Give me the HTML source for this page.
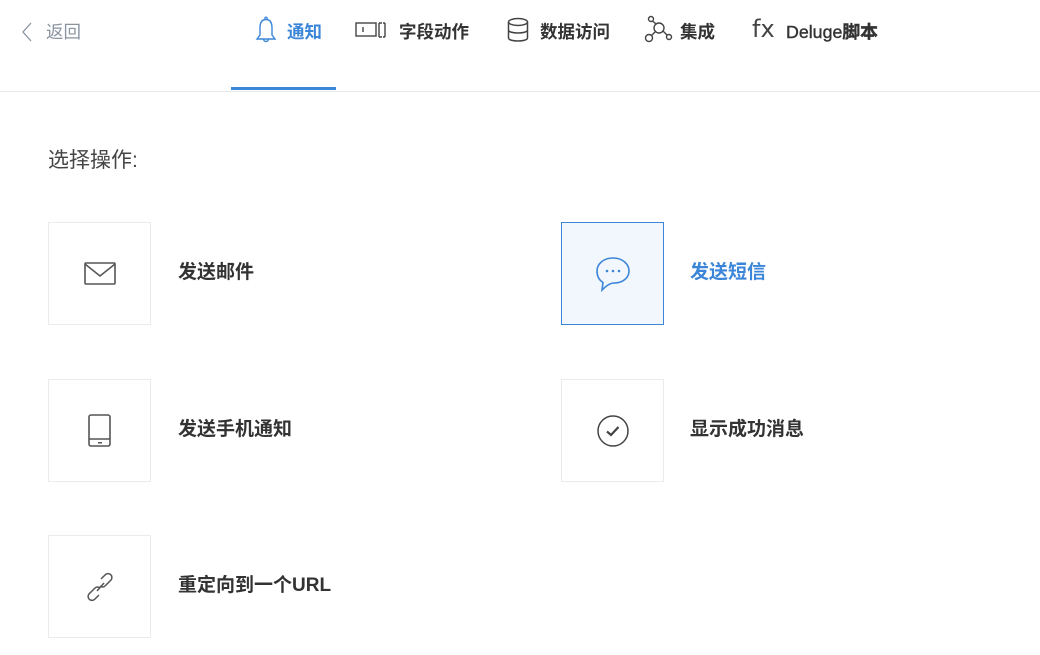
<!DOCTYPE html>
<html><head><meta charset="utf-8"><style>
*{margin:0;padding:0;box-sizing:border-box}
body{width:1040px;height:655px;background:#fff;font-family:"Liberation Sans","Noto Sans CJK SC",sans-serif;position:relative;overflow:hidden;color:#333}
.a{position:absolute}
.nav{font-size:17.5px;font-weight:bold;color:#333;line-height:20px;top:22px}
.box{position:absolute;width:103px;height:103px;border:1px solid #ebebeb;display:flex;align-items:center;justify-content:center}
.lbl{position:absolute;font-size:19px;font-weight:bold;color:#333;line-height:20px}
</style></head><body>
<svg class="a" style="left:20px;top:22px" width="14" height="20" viewBox="0 0 14 20"><path d="M11 1 L3 10 L11 19" fill="none" stroke="#8a93a0" stroke-width="1.3"/></svg>
<div class="a" style="left:46px;top:22px;font-size:17.5px;color:#8a93a0;line-height:20px">返回</div>

<svg class="a" style="left:254px;top:16px" width="24" height="28" viewBox="0 0 24 28"><path d="M12 3.5 C7 3.5 6 8 6 12 L6 19 L3 23 L21 23 L18 19 L18 12 C18 8 17 3.5 12 3.5 Z M9.5 23 a2.5 2.5 0 0 0 5 0" fill="none" stroke="#3b86d8" stroke-width="1.4"/><circle cx="12" cy="2.3" r="1.2" fill="none" stroke="#3b86d8" stroke-width="1.2"/></svg>
<div class="a nav" style="left:287px;color:#3b86d8">通知</div>
<div class="a" style="left:231px;top:87px;width:105px;height:3px;background:#3b86d8"></div>

<svg class="a" style="left:355px;top:20px" width="34" height="20" viewBox="0 0 34 20"><rect x="1" y="3" width="20" height="13" fill="none" stroke="#444" stroke-width="1.4"/><path d="M8 7 L8 12 M24 3 L24 17 M24 3 L27 3 M24 17 L27 17 M30 3 L30 17 M28 3 L30 3 M28 17 L30 17" fill="none" stroke="#444" stroke-width="1.4"/></svg>
<div class="a nav" style="left:399px">字段动作</div>

<svg class="a" style="left:506px;top:17px" width="24" height="26" viewBox="0 0 24 26"><ellipse cx="12" cy="5" rx="9.5" ry="3.5" fill="none" stroke="#444" stroke-width="1.5"/><path d="M2.5 5 L2.5 21 C2.5 25 21.5 25 21.5 21 L21.5 5 M2.5 13 C2.5 17 21.5 17 21.5 13" fill="none" stroke="#444" stroke-width="1.5"/></svg>
<div class="a nav" style="left:540px">数据访问</div>

<svg class="a" style="left:644px;top:15px" width="30" height="28" viewBox="0 0 30 28"><circle cx="7" cy="4" r="2.5" fill="none" stroke="#444" stroke-width="1.4"/><circle cx="15" cy="13" r="5" fill="none" stroke="#444" stroke-width="1.4"/><circle cx="5" cy="23" r="3.5" fill="none" stroke="#444" stroke-width="1.4"/><circle cx="25" cy="22" r="2.5" fill="none" stroke="#444" stroke-width="1.4"/><path d="M8.5 6 L12 9 M11.5 16.5 L7.5 20.5 M19 16 L23 20" stroke="#444" stroke-width="1.4"/></svg>
<div class="a nav" style="left:680px">集成</div>

<div class="a" style="left:752px;top:16px;font-size:24px;color:#444;line-height:26px;font-family:'DejaVu Sans',sans-serif">fx</div>
<div class="a nav" style="left:786px;font-weight:normal;-webkit-text-stroke:0.4px #333;font-size:17.8px">Deluge<b>脚本</b></div>

<div class="a" style="left:0;top:91px;width:1040px;height:1px;background:#e8e8e8"></div>

<div class="a" style="left:48px;top:150px;font-size:21px;line-height:22px;color:#444">选择操作:</div>

<div class="box" style="left:48px;top:222px"><svg width="32" height="24" viewBox="0 0 32 24"><rect x="1" y="1" width="30" height="21" rx="1" fill="none" stroke="#555" stroke-width="1.6"/><path d="M1 2 L16 14 L31 2" fill="none" stroke="#555" stroke-width="1.5"/></svg></div>
<div class="lbl" style="left:178px;top:263px">发送邮件</div>

<div class="box" style="left:561px;top:222px;background:#f2f7fe;border-color:#3b86d8"><svg width="40" height="38" viewBox="0 0 40 38"><path d="M20 3 C29.5 3 36 9 36 16 C36 23 29.5 28 21 28 C17 28 13 31 9 35 L10 27.5 C6 25 4 21 4 16 C4 9 10.5 3 20 3 Z" fill="none" stroke="#3b86d8" stroke-width="1.6"/><circle cx="14" cy="16" r="1.3" fill="#3b86d8"/><circle cx="20" cy="16" r="1.3" fill="#3b86d8"/><circle cx="26" cy="16" r="1.3" fill="#3b86d8"/></svg></div>
<div class="lbl" style="left:690px;top:263px;color:#3b86d8">发送短信</div>

<div class="box" style="left:48px;top:379px"><svg width="26" height="36" viewBox="0 0 26 36"><rect x="2" y="2" width="21" height="31" rx="2" fill="none" stroke="#555" stroke-width="1.6"/><path d="M2 26 L23 26" stroke="#555" stroke-width="1.4"/><rect x="11" y="29" width="4" height="1.5" fill="#555"/></svg></div>
<div class="lbl" style="left:178px;top:420px">发送手机通知</div>

<div class="box" style="left:561px;top:379px"><svg width="34" height="34" viewBox="0 0 34 34"><circle cx="17" cy="17" r="15" fill="none" stroke="#444" stroke-width="1.5"/><path d="M11 17.5 L15 21 L22.5 13" fill="none" stroke="#444" stroke-width="2.2"/></svg></div>
<div class="lbl" style="left:690px;top:420px">显示成功消息</div>

<div class="box" style="left:48px;top:535px"><svg width="32" height="30" viewBox="0 0 32 30"><g fill="none" stroke="#555" stroke-width="1.5"><path d="M17 7 L21 3 a3.5 3.5 0 0 1 6 5 L21 14 a3.5 3.5 0 0 1 -5 0"/><path d="M15 23 L11 27 a3.5 3.5 0 0 1 -6 -5 L11 16 a3.5 3.5 0 0 1 5 0"/><path d="M13 19 L20 11"/></g></svg></div>
<div class="lbl" style="left:178px;top:576px">重定向到一个URL</div>
</body></html>
